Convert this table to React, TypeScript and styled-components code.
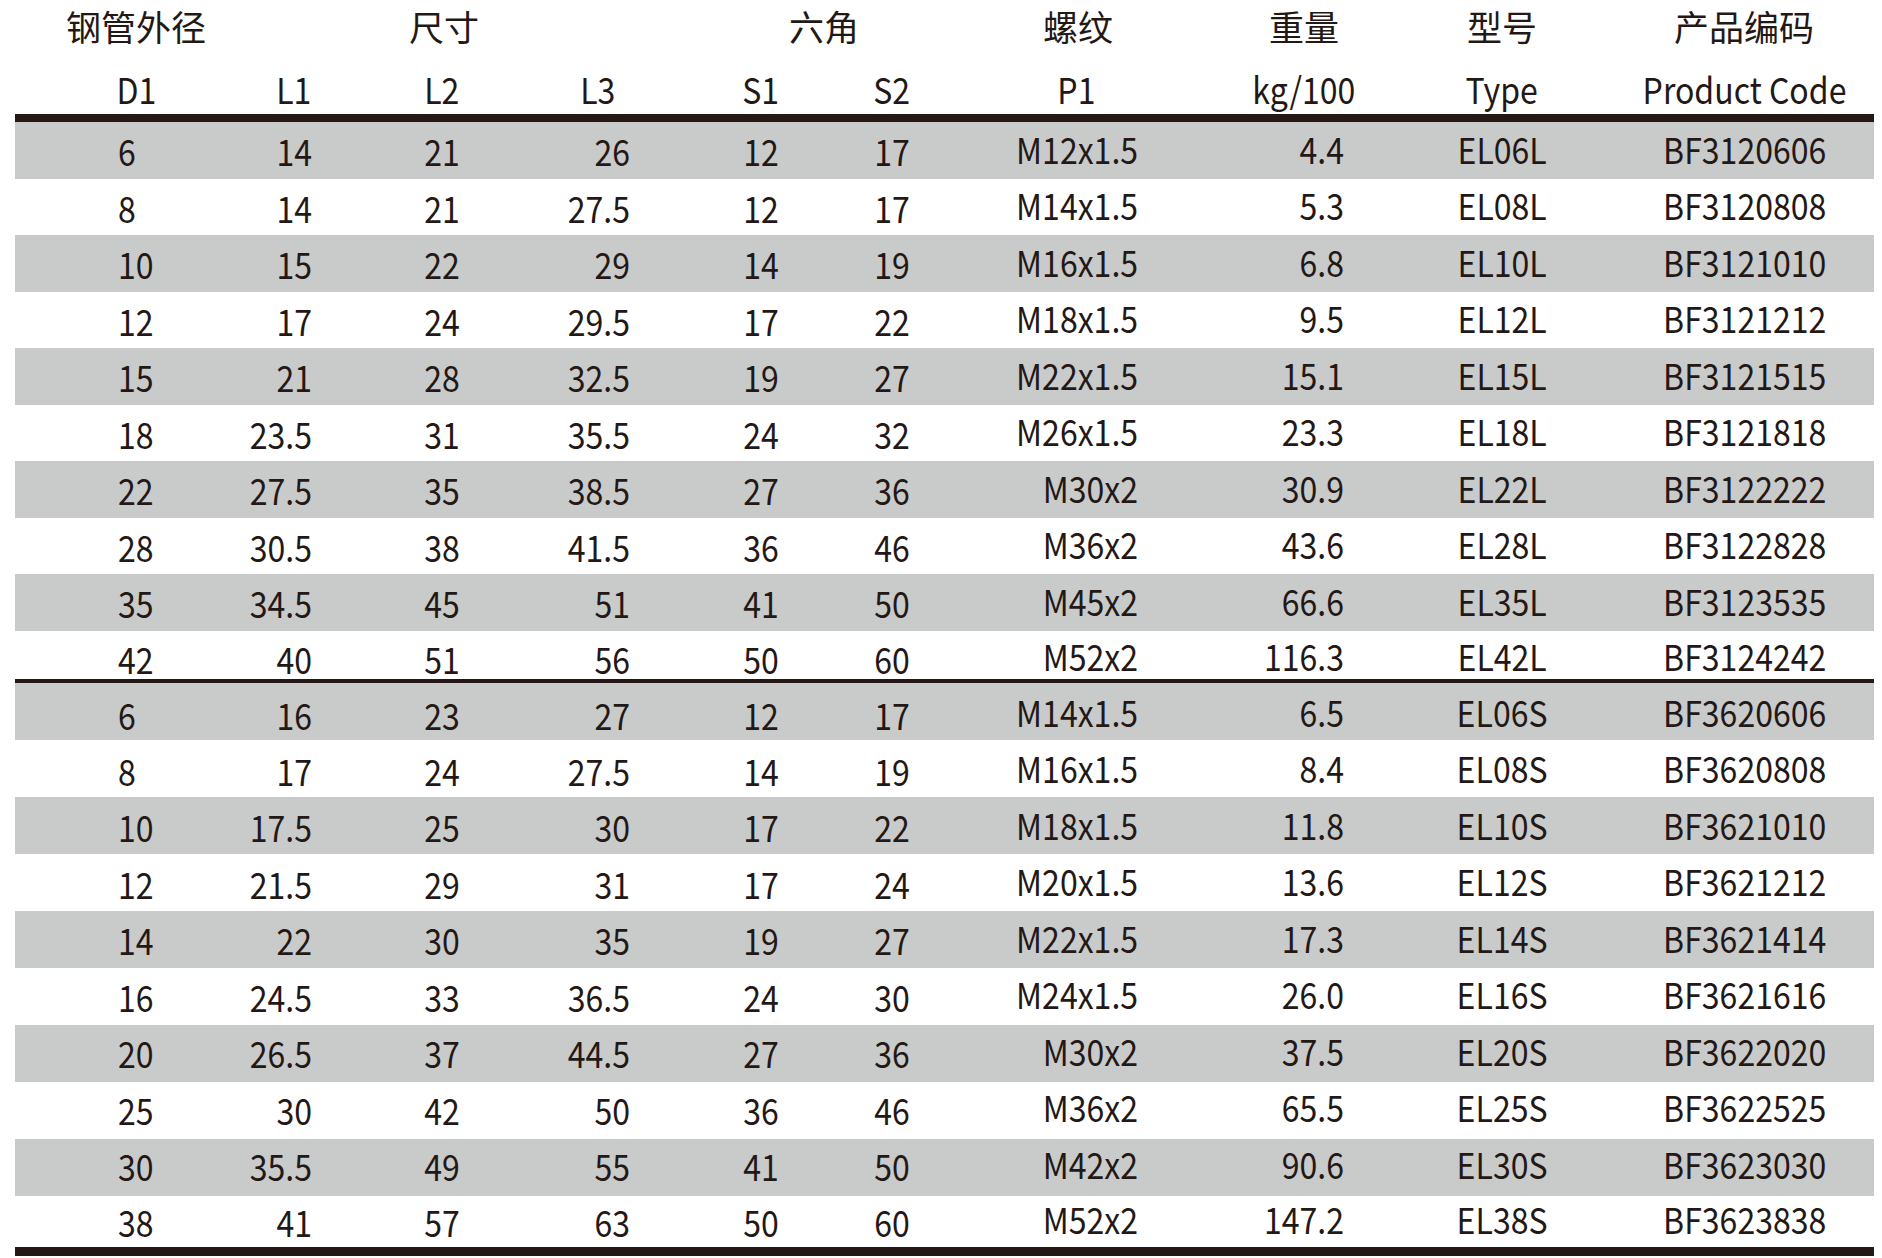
import React from "react";
import styled, { createGlobalStyle } from "styled-components";

type Align = "left" | "right" | "center";

interface Column {
  align: Align;
  pl?: number;
  pr?: number;
  raise?: boolean;
}

const INK = "#231815";
const SHADE = "#c9caca";
const TEMPLATE = "200px 153px 152px 160px 146px 158px 206px 213px 220px 251px";

// header labels are centred, shifted a little so they sit where the print has them
const headCols: Column[] = [
  { align: "center", pl: 42 },
  { align: "center", pl: 5 },
  { align: "center", pr: 4 },
  { align: "center", pr: 4 },
  { align: "center", pl: 16 },
  { align: "center", pr: 26 },
  { align: "center", pr: 22 },
  { align: "center", pl: 15 },
  { align: "center", pr: 22 },
  { align: "center", pr: 9 },
];

const bodyCols: Column[] = [
  { align: "left", pl: 103 },
  { align: "right", pr: 56 },
  { align: "center", pr: 4 },
  { align: "right", pr: 50 },
  { align: "center", pl: 16 },
  { align: "center", pr: 26 },
  { align: "right", pr: 52, raise: true },
  { align: "right", pr: 59, raise: true },
  { align: "center", pr: 22, raise: true },
  { align: "center", pr: 7, raise: true },
];

const groups = [
  { label: "钢管外径", span: 1, pl: 42 },
  { label: "尺寸", span: 3, pr: 7 },
  { label: "六角", span: 2, pr: 16 },
  { label: "螺纹", span: 1, pr: 18 },
  { label: "重量", span: 1, pl: 15 },
  { label: "型号", span: 1, pr: 22 },
  { label: "产品编码", span: 1, pr: 9 },
];

const units = ["D1", "L1", "L2", "L3", "S1", "S2", "P1", "kg/100", "Type", "Product Code"];

const longSeries = [
  ["6", "14", "21", "26", "12", "17", "M12x1.5", "4.4", "EL06L", "BF3120606"],
  ["8", "14", "21", "27.5", "12", "17", "M14x1.5", "5.3", "EL08L", "BF3120808"],
  ["10", "15", "22", "29", "14", "19", "M16x1.5", "6.8", "EL10L", "BF3121010"],
  ["12", "17", "24", "29.5", "17", "22", "M18x1.5", "9.5", "EL12L", "BF3121212"],
  ["15", "21", "28", "32.5", "19", "27", "M22x1.5", "15.1", "EL15L", "BF3121515"],
  ["18", "23.5", "31", "35.5", "24", "32", "M26x1.5", "23.3", "EL18L", "BF3121818"],
  ["22", "27.5", "35", "38.5", "27", "36", "M30x2", "30.9", "EL22L", "BF3122222"],
  ["28", "30.5", "38", "41.5", "36", "46", "M36x2", "43.6", "EL28L", "BF3122828"],
  ["35", "34.5", "45", "51", "41", "50", "M45x2", "66.6", "EL35L", "BF3123535"],
  ["42", "40", "51", "56", "50", "60", "M52x2", "116.3", "EL42L", "BF3124242"],
];

const shortSeries = [
  ["6", "16", "23", "27", "12", "17", "M14x1.5", "6.5", "EL06S", "BF3620606"],
  ["8", "17", "24", "27.5", "14", "19", "M16x1.5", "8.4", "EL08S", "BF3620808"],
  ["10", "17.5", "25", "30", "17", "22", "M18x1.5", "11.8", "EL10S", "BF3621010"],
  ["12", "21.5", "29", "31", "17", "24", "M20x1.5", "13.6", "EL12S", "BF3621212"],
  ["14", "22", "30", "35", "19", "27", "M22x1.5", "17.3", "EL14S", "BF3621414"],
  ["16", "24.5", "33", "36.5", "24", "30", "M24x1.5", "26.0", "EL16S", "BF3621616"],
  ["20", "26.5", "37", "44.5", "27", "36", "M30x2", "37.5", "EL20S", "BF3622020"],
  ["25", "30", "42", "50", "36", "46", "M36x2", "65.5", "EL25S", "BF3622525"],
  ["30", "35.5", "49", "55", "41", "50", "M42x2", "90.6", "EL30S", "BF3623030"],
  ["38", "41", "57", "63", "50", "60", "M52x2", "147.2", "EL38S", "BF3623838"],
];

interface SectionProps {
  rows: string[][];
  pitch: number;
  last: number;
  top: number;
  drift: number; // extra drop of the text on the first row, fading out towards the last
}

const Block: React.FC<SectionProps> = ({ rows, pitch, last, top, drift }) => (
  <>
    {rows.map((row, i) => {
      const isLast = i === rows.length - 1;
      const rowTop = (isLast ? top - 1 : top) + (drift * (rows.length - 1 - i)) / (rows.length - 1);
      return (
        <Row key={row[9]} $height={isLast ? last : pitch} $shade={i % 2 === 0}>
          {row.map((value, c) => {
            const col = bodyCols[c];
            return (
              <Cell
                key={c}
                $align={col.align}
                $pl={col.pl}
                $pr={col.pr}
                $top={col.raise ? rowTop - 2.5 : rowTop}
              >
                <Narrow $align={col.align}>{value}</Narrow>
              </Cell>
            );
          })}
        </Row>
      );
    })}
  </>
);

export default function App() {
  return (
    <>
      <GlobalStyle />
      <Sheet>
        <GroupRow>
          {groups.map((g) => (
            <GroupCell key={g.label} $span={g.span} $pl={g.pl} $pr={g.pr}>
              {g.label}
            </GroupCell>
          ))}
        </GroupRow>
        <HeadRow>
          {units.map((u, c) => (
            <Cell key={u} $align="center" $pl={headCols[c].pl} $pr={headCols[c].pr} $top={13.5}>
              <Narrow $align="center">{u}</Narrow>
            </Cell>
          ))}
        </HeadRow>
        <Rule $weight={8} />
        <Block rows={longSeries} pitch={56.5} last={48.5} top={6} drift={0} />
        <Rule $weight={4} />
        <Block rows={shortSeries} pitch={57} last={51} top={3.5} drift={5} />
        <Rule $weight={9} />
      </Sheet>
    </>
  );
}

const GlobalStyle = createGlobalStyle`
  body {
    margin: 0;
    background: #ffffff;
    color: ${INK};
    font-family: "Noto Sans CJK SC", "Noto Sans", sans-serif;
  }
`;

const Sheet = styled.div`
  width: 1859px;
  margin-left: 15px;
`;

const GroupRow = styled.div`
  display: grid;
  grid-template-columns: ${TEMPLATE};
  height: 52px;
`;

const GroupCell = styled.div<{ $span: number; $pl?: number; $pr?: number }>`
  grid-column: span ${(p) => p.$span};
  text-align: center;
  font-size: 35px;
  line-height: 44px;
  padding: 4px ${(p) => p.$pr ?? 0}px 0 ${(p) => p.$pl ?? 0}px;
  white-space: nowrap;
`;

const HeadRow = styled.div`
  display: grid;
  grid-template-columns: ${TEMPLATE};
  height: 62px;
`;

const Row = styled.div<{ $height: number; $shade: boolean }>`
  display: grid;
  grid-template-columns: ${TEMPLATE};
  height: ${(p) => p.$height}px;
  background: ${(p) => (p.$shade ? SHADE : "transparent")};
`;

const Cell = styled.div<{ $align: Align; $pl?: number; $pr?: number; $top: number }>`
  text-align: ${(p) => p.$align};
  font-size: 36px;
  line-height: 44px;
  padding: ${(p) => p.$top}px ${(p) => p.$pr ?? 0}px 0 ${(p) => p.$pl ?? 0}px;
  white-space: nowrap;
`;

// the print uses a condensed cut of the latin figures
const Narrow = styled.span<{ $align: Align }>`
  display: inline-block;
  transform: scaleX(0.89);
  transform-origin: ${(p) => p.$align} center;
`;

const Rule = styled.div<{ $weight: number }>`
  height: ${(p) => p.$weight}px;
  background: ${INK};
`;
